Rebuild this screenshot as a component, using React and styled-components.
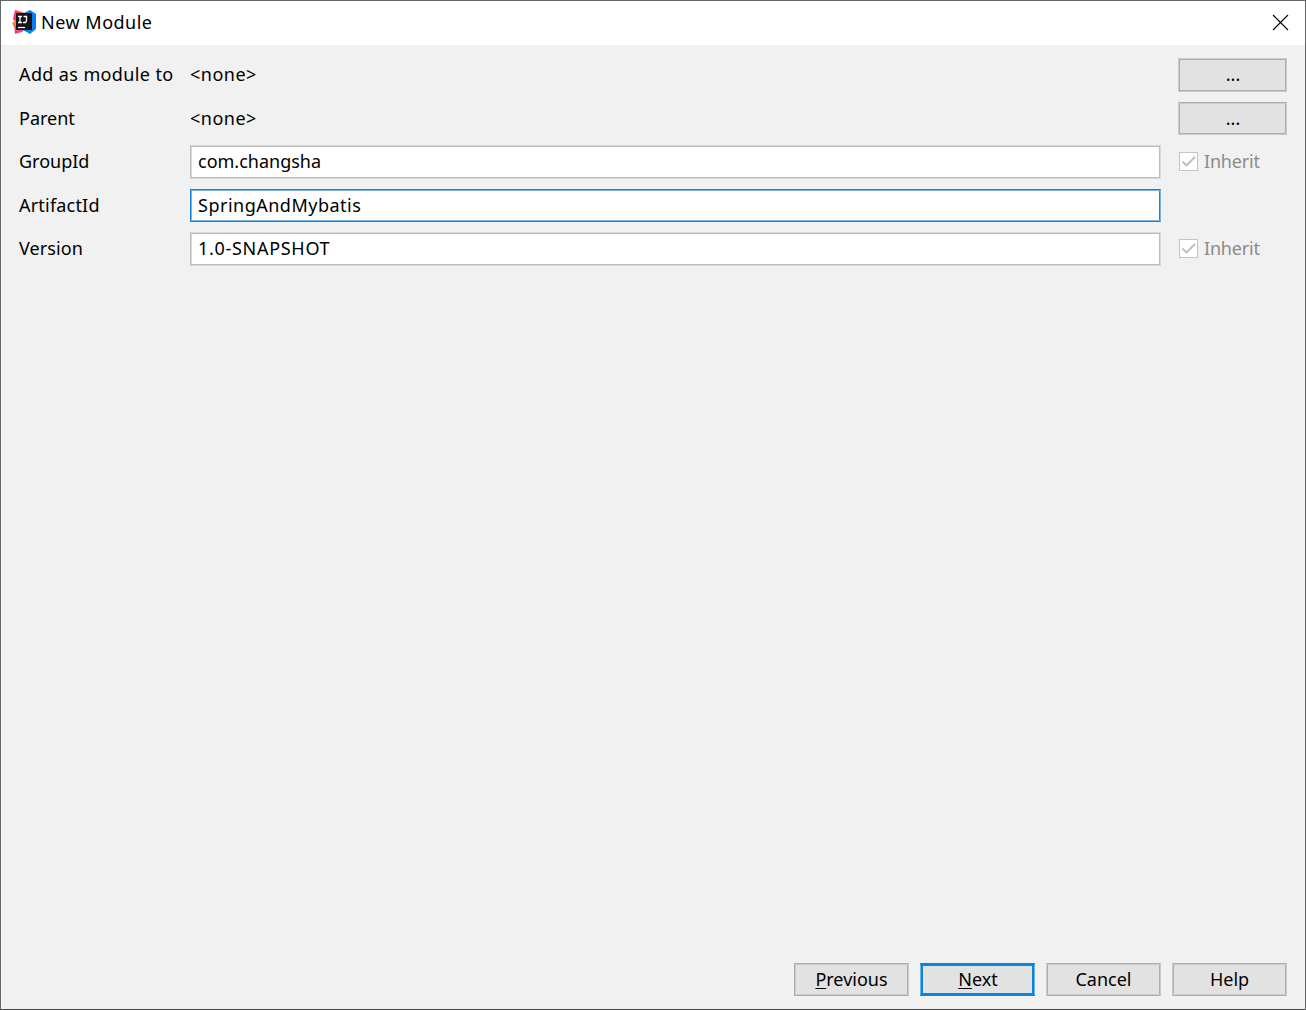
import React from 'react'
import { createGlobalStyle, css, styled } from 'styled-components'

const GlobalStyle = createGlobalStyle`
  * {
    box-sizing: border-box;
  }
  body {
    margin: 0;
    overflow: hidden;
  }
`;

// Two-tone frame. $crisp lists the sides (t, r, b, l) whose outer pixel is the dark one.
const frame = css`
  ${({ $crisp = '', $dark = '#adadad', $light = '#cbcbcb' }) => {
    const outer = (side) => ($crisp.includes(side) ? $dark : $light);
    const inner = (side) => ($crisp.includes(side) ? $light : $dark);
    return css`
      border: 1px solid;
      border-color: ${outer('t')} ${outer('r')} ${outer('b')} ${outer('l')};
      box-shadow:
        inset 0 1px ${inner('t')},
        inset 0 -1px ${inner('b')},
        inset 1px 0 ${inner('l')},
        inset -1px 0 ${inner('r')};
    `;
  }}
`;

const Dialog = styled.div`
  display: flex;
  flex-direction: column;
  width: 1306px;
  height: 1010px;
  border: 1px solid #666;
  border-bottom-color: #4b494b;
  background-color: #f1f1f1;
  color: #000;
  font-family: "Noto Sans", "Open Sans", sans-serif;
  font-size: 18px;
  line-height: 24px;
  white-space: nowrap;
`;

const TitleBar = styled.header`
  display: flex;
  align-items: center;
  height: 44px;
  padding: 0 16px 1px 11px;
  background-color: #fff;
`;

const Logo = styled.svg`
  margin-bottom: 1px;
`;

const Title = styled.h1`
  flex: 1;
  margin: -2px 0 0 4px;
  font-size: 18px;
  font-weight: 400;
  letter-spacing: 0.5px;
`;

const CloseButton = styled.button`
  display: flex;
  padding: 0;
  border: none;
  background: none;
`;

const Form = styled.main`
  flex: 1;
  padding: 13px 18px 0;
`;

const Row = styled.div`
  display: grid;
  grid-template-columns: 171px 971px 109px;
  column-gap: 0;
  align-items: start;
  height: ${({ $height }) => $height || 44}px;
`;

const Text = styled.span`
  padding-top: 4px;
  letter-spacing: ${({ $spacing }) => $spacing || 0}px;
`;

const Input = styled.input`
  ${frame}
  width: 971px;
  height: ${({ $height }) => $height || 34}px;
  padding: 0 7px ${({ $bottom }) => $bottom ?? 3}px;
  outline: none;
  background-color: #fff;
  color: #000;
  font: inherit;
  letter-spacing: ${({ $spacing }) => $spacing || 0}px;
`;

const Button = styled.button`
  ${frame}
  width: 115px;
  height: 33px;
  padding: 0 0 2px;
  background-color: #e2e2e2;
  color: #000;
  font: inherit;
  line-height: 24px;
`;

const PrimaryButton = styled(Button)`
  padding-left: 1px;
  border: solid #0a84de;
  border-width: 3px 1px;
  border-left-color: #72b4e6;
  border-right-color: #72b4e6;
  box-shadow: inset 2px 0 #0a84de, inset -2px 0 #0a84de;
`;

const BrowseButton = styled(Button)`
  width: 109px;
  height: ${({ $height }) => $height || 33}px;
  margin-left: 17px;
  padding-left: 1px;
`;

const Mnemonic = styled.span`
  text-decoration: underline;
  text-decoration-thickness: 1px;
  text-underline-offset: 2px;
`;

const Inherit = styled.label`
  display: flex;
  align-items: center;
  gap: 6px;
  height: 33px;
  padding-left: 18px;
  color: #8b8b8b;
  letter-spacing: -0.2px;
`;

const InheritText = styled.span`
  margin-top: -2px;
`;

const CheckBox = styled.span`
  display: flex;
  align-items: center;
  justify-content: center;
  width: 19px;
  height: 19px;
  border: 1px solid #c4c4c4;
  background-color: #fff;
`;

const Footer = styled.footer`
  display: flex;
  justify-content: flex-end;
  gap: 11px;
  padding: 0 18px 13px;
`;

const IdeaLogo = () => (
  <Logo width="25" height="24" viewBox="0 0 25 24">
    <path d="M3 0 13 3 10 15 3 12 1 9Z" fill="#fb3b67" />
    <path d="M0 13 4 10 9 17 2 17Z" fill="#f68b32" />
    <path d="M2 15 12 20 10 22 3 24Z" fill="#e74980" />
    <path d="M12 3 18 0 24 4 24 19 18 24 11 20Z" fill="#087df4" />
    <path d="M4 3H20V20H4Z" fill="#151515" />
    <path d="M6 6.5H10M8 6.5V12.5M6 12.5H10M11.5 6.5H14.5V11L13.5 12.5H11" fill="none" stroke="#fff" strokeWidth="1.3" />
    <path d="M6 17.5H13" stroke="#fff" strokeWidth="1.2" />
  </Logo>
)

const CloseIcon = () => (
  <svg width="17" height="17" viewBox="0 0 17 17">
    <path d="M1 1 16 16M16 1 1 16" stroke="#000" strokeWidth="1.1" />
  </svg>
)

const InheritOption = () => (
  <Inherit>
    <CheckBox>
      <svg width="17" height="17" viewBox="0 0 17 17">
        <path d="M2.5 8.5 6.5 12.5 15 4" fill="none" stroke="#bdbdbd" strokeWidth="1.9" />
      </svg>
    </CheckBox>
    <InheritText>Inherit</InheritText>
  </Inherit>
)

const App = () => {
  return (
    <>
      <GlobalStyle />
      <Dialog>
        <TitleBar>
          <IdeaLogo />
          <Title>New Module</Title>
          <CloseButton aria-label="Close"><CloseIcon /></CloseButton>
        </TitleBar>
        <Form>
          <Row>
            <Text $spacing={0.38}>Add as module to</Text>
            <Text $spacing={0.5}>&lt;none&gt;</Text>
            <BrowseButton $height={34}>...</BrowseButton>
          </Row>
          <Row $height={43}>
            <Text>Parent</Text>
            <Text $spacing={0.5}>&lt;none&gt;</Text>
            <BrowseButton $crisp="t">...</BrowseButton>
          </Row>
          <Row>
            <Text>GroupId</Text>
            <Input $crisp="l" $dark="#bdbdbd" $light="#d9d9d9" defaultValue="com.changsha" />
            <InheritOption />
          </Row>
          <Row $height={43}>
            <Text $spacing={0.2}>ArtifactId</Text>
            <Input
              $crisp="tlb"
              $dark="#1583d8"
              $light="#72b4e6"
              $height={33}
              $bottom={1}
              $spacing={0.5}
              defaultValue="SpringAndMybatis"
            />
          </Row>
          <Row>
            <Text $spacing={0.1}>Version</Text>
            <Input $crisp="l" $dark="#bdbdbd" $light="#d9d9d9" $spacing={0.7} defaultValue="1.0-SNAPSHOT" />
            <InheritOption />
          </Row>
        </Form>
        <Footer>
          <Button $crisp="tlb"><Mnemonic>P</Mnemonic>revious</Button>
          <PrimaryButton><Mnemonic>N</Mnemonic>ext</PrimaryButton>
          <Button $crisp="tb">Cancel</Button>
          <Button $crisp="tb">Help</Button>
        </Footer>
      </Dialog>
    </>
  )
}

export default App
